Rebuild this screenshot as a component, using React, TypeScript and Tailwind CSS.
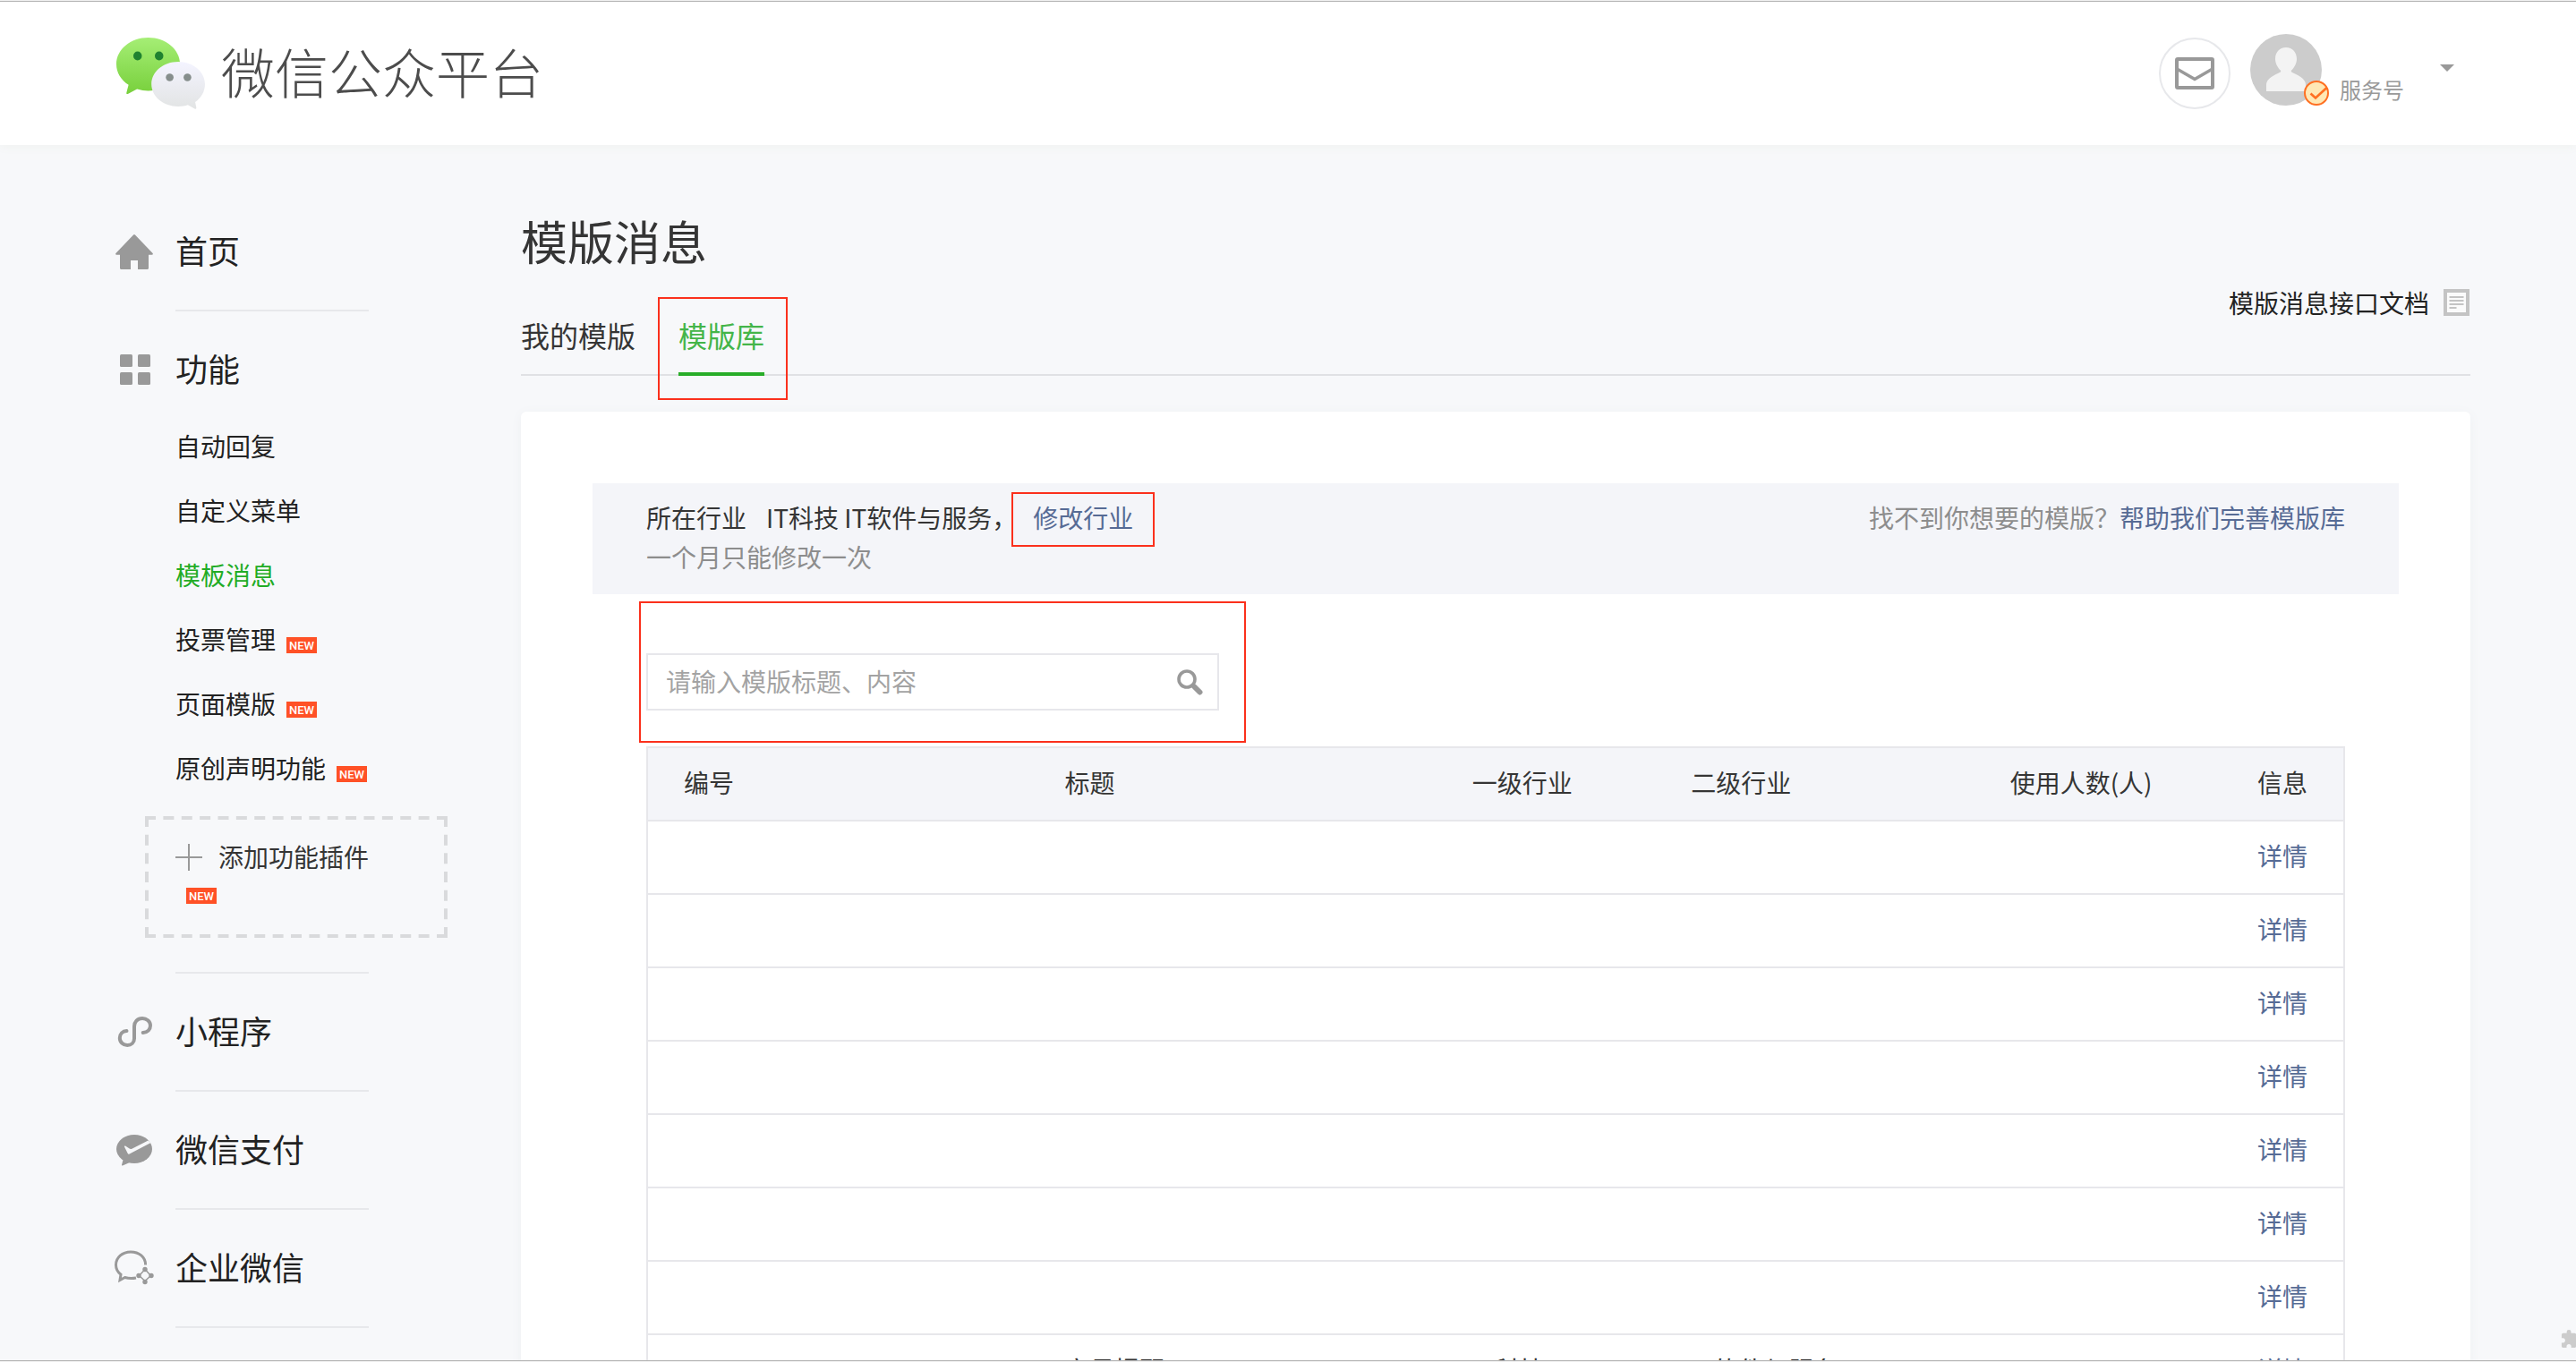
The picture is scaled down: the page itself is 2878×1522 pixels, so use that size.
import React, { useState } from "react";
import { MdExtension } from "react-icons/md";

function NewBadge() {
  return (
    <span className="inline-flex h-[18px] w-[34px] shrink-0 items-center justify-center bg-[#ff5126] font-['Roboto',sans-serif] text-[13px] leading-none font-medium text-white">
      NEW
    </span>
  );
}

function WechatLogo() {
  return (
    <svg aria-hidden="true" viewBox="0 0 96 80" preserveAspectRatio="none" className="h-20 w-[99px]">
      <defs>
        <linearGradient id="green" x1="0" y1="0" x2="0" y2="1">
          <stop offset="0" stopColor="#a5ee75" />
          <stop offset="1" stopColor="#78d03c" />
        </linearGradient>
        <linearGradient id="grey" x1="0" y1="0" x2="0" y2="1">
          <stop offset="0" stopColor="#f4f4ff" />
          <stop offset="1" stopColor="#e2e4e4" />
        </linearGradient>
      </defs>
      <path
        fill="url(#green)"
        d="M34.500 0C15.500 0 0 13.300 0 29.700 0 39 5 47.300 13.200 52.800L11 61.500c-.4 1.500.6 2 1.900 1.200l9.500-5.300c3.900 1.300 8.400 2 12.100 2C53.500 59.400 69 46.100 69 29.700S53.500 0 34.500 0Z"
      />
      <ellipse cx="23" cy="20.500" rx="4.600" ry="5" fill="#208230" />
      <ellipse cx="46.300" cy="20.500" rx="4.600" ry="5" fill="#208230" />
      <path
        fill="url(#grey)"
        d="M67 27C51 27 38 38.200 38 52s13 25 29 25c3.900 0 7.600-.6 10.500-1.700l7.300 4.200c1.200.7 2 .2 1.800-1.200l-1.200-6.300C92 67.400 96 60 96 52 96 38.200 83 27 67 27Z"
      />
      <circle cx="57.800" cy="44.500" r="4.200" fill="#868e8c" />
      <circle cx="77" cy="44.500" r="4.200" fill="#868e8c" />
    </svg>
  );
}

function HomeIcon() {
  return (
    <svg aria-hidden="true" viewBox="0 0 44 44" className="size-11 fill-[#999]">
      <path d="M20.800 3.700a1.700 1.700 0 0 1 2.400 0L42.600 24c.5.600.3 1.700-.6 1.700h-4v14.800c0 .9-.6 1.500-1.500 1.500H26V32h-8v10H7.500c-.9 0-1.500-.6-1.500-1.500V25.700H2c-.9 0-1.100-1.100-.6-1.700Z" />
    </svg>
  );
}

function GridIcon() {
  return (
    <svg aria-hidden="true" viewBox="0 0 44 44" className="size-11 fill-[#999]">
      <rect x="6" y="5" width="14" height="14" rx="1.500" />
      <rect x="26" y="5" width="14" height="14" rx="1.500" />
      <rect x="6" y="25" width="14" height="14" rx="1.500" />
      <rect x="26" y="25" width="14" height="14" rx="1.500" />
    </svg>
  );
}

function MiniProgramIcon() {
  return (
    <svg aria-hidden="true" viewBox="0 0 44 44" className="size-11 fill-none stroke-[#999]">
      <path
        d="M13.500 21C9 21.200 5.800 24.500 5.800 29c0 4.600 4 8 8.400 8 4.600 0 7.800-3 7.800-7.600V16C22 11.200 25.500 7 31 7c4.800 0 9 3.400 9 8 0 4.500-3.200 7.700-8.300 8"
        strokeWidth="4"
        strokeLinecap="round"
      />
    </svg>
  );
}

function PayIcon() {
  return (
    <svg aria-hidden="true" viewBox="0 0 44 44" className="size-11">
      <ellipse cx="22" cy="21" rx="20" ry="16" fill="#999" />
      <path d="M9.500 33 8 38.700c-.2.700.3 1 1 .7L17 36Z" fill="#999" />
      <path
        d="M11 18.500c-.3-1 .7-1.300 1.400-.8l4.200 2.900c.8.500 1.800.5 2.800.1L37.500 11.500l3 2.500L18 25.800c-2 1.300-2.800 1.300-3.500-.3Z"
        fill="#f7f8fa"
      />
    </svg>
  );
}

function WorkIcon() {
  return (
    <svg aria-hidden="true" viewBox="0 0 44 44" className="size-11 fill-none stroke-[#999]">
      <path
        d="M34.600 18.500C34.600 9.600 27.400 4 18 4S1.500 10.300 1.500 18.500c0 4.500 2 8 5.500 10.700L6 35.500l5.500-3c4.500 1.300 8 1.300 12.500.5"
        strokeWidth="3"
      />
      <path d="M34 23.500 40.500 30.500 34 36.500 27.500 30.500Z" strokeWidth="1.500" />
      <g className="fill-[#999] stroke-none">
        <circle cx="34" cy="23.500" r="2.700" />
        <circle cx="41" cy="30.500" r="2.700" />
        <circle cx="34" cy="37.500" r="2.700" />
        <circle cx="27" cy="30.500" r="2.700" />
      </g>
    </svg>
  );
}

function Section({
  icon,
  title,
  children,
}: {
  icon: React.ReactNode;
  title: string;
  children?: React.ReactNode;
}) {
  return (
    <section>
      <a href="#" className="flex h-[130px] items-center gap-6 text-[36px] leading-[54px] text-[#222]">
        {icon}
        <span className="pb-1">{title}</span>
      </a>
      {children}
      <hr className="ml-[68px] w-[216px] border-t-2 border-[#e7e8eb]" />
    </section>
  );
}

const features = [
  { name: "自动回复" },
  { name: "自定义菜单" },
  { name: "模板消息", active: true },
  { name: "投票管理", isNew: true },
  { name: "页面模版", isNew: true },
  { name: "原创声明功能", isNew: true },
];

function Sidebar() {
  return (
    <nav className="w-[454px] shrink-0 pt-[54px]">
      <Section icon={<HomeIcon />} title="首页" />
      <Section icon={<GridIcon />} title="功能">
        <ul className="-mt-[14px]">
          {features.map((f) => (
            <li key={f.name} className="h-[72px]">
              <a
                href="#"
                className={
                  f.active
                    ? "ml-[68px] flex h-full items-center gap-3 text-[28px] text-[#22ac25]"
                    : "ml-[68px] flex h-full items-center gap-3 text-[28px] text-[#222]"
                }
              >
                <span className="pb-1">{f.name}</span>
                {f.isNew && (
                  <span className="flex pt-[10px]">
                    <NewBadge />
                  </span>
                )}
              </a>
            </li>
          ))}
        </ul>
        <button
          type="button"
          className="relative mt-4 mb-[38px] ml-[34px] flex h-[136px] w-[338px] flex-col pt-6 pl-[34px] text-left text-[28px] text-[#353535]"
        >
          <svg
            aria-hidden="true"
            viewBox="0 0 338 136"
            preserveAspectRatio="none"
            className="absolute inset-0 size-full fill-none stroke-[#d9dadc]"
          >
            <path d="M0 2H338M0 134H338" strokeWidth="4" strokeDasharray="12 8.375" />
            <path d="M2 0V136M336 0V136" strokeWidth="4" strokeDasharray="12 8.666" />
          </svg>
          <span className="flex h-11 items-center gap-[18px]">
            <svg aria-hidden="true" viewBox="0 0 30 30" className="size-[30px] stroke-[#999] stroke-2">
              <path d="M15 0v30M0 15h30" />
            </svg>
            <span className="pb-0.5">添加功能插件</span>
          </span>
          <span className="mt-3 ml-3 flex">
            <NewBadge />
          </span>
        </button>
      </Section>
      <Section icon={<MiniProgramIcon />} title="小程序" />
      <Section icon={<PayIcon />} title="微信支付" />
      <Section icon={<WorkIcon />} title="企业微信" />
    </nav>
  );
}

function Header() {
  return (
    <header className="flex h-40 shrink-0 items-center justify-between bg-white pr-[118px] pl-[130px] shadow-[0_2px_10px_#f0f2f0]">
      <a href="#" className="flex items-center gap-[18px] text-[60px] leading-[80px] font-light text-[#4c4c4c]">
        <WechatLogo />
        <span className="pb-1.5">微信公众平台</span>
      </a>
      <div className="flex items-start pb-1">
        <a
          href="#"
          aria-label="消息"
          className="mt-1 flex size-20 items-center justify-center rounded-full border-2 border-[#e7e8eb]"
        >
          <svg aria-hidden="true" viewBox="0 0 44 36" className="h-9 w-11 fill-none stroke-[#999]">
            <rect x="2" y="2" width="40" height="32" rx="1" strokeWidth="4" />
            <path d="M3 13.500 22 24.500 41 13.500" strokeWidth="3.600" />
          </svg>
        </a>
        <div className="relative ml-[22px]">
          <svg role="img" aria-label="头像" viewBox="0 0 80 80" className="size-20">
            <circle cx="40" cy="40" r="40" fill="#ccc" />
            <path
              fill="#f3f3f3"
              d="M40 15c7.500 0 12 5.600 12 13 0 4.600-2.600 9.600-6.300 13 .2 1.500 1 2 2.300 2.500 9 4 14 7.500 14 13.500v7H18v-7c0-6 5-9.500 14-13.500 1.300-.5 2.100-1 2.300-2.500C30.600 37.600 28 32.600 28 28c0-7.400 4.500-13 12-13Z"
            />
          </svg>
          <svg aria-hidden="true" viewBox="0 0 28 28" className="absolute top-[52px] left-[60px] size-7 fill-none stroke-[#ff7022]">
            <circle cx="14" cy="14" r="13" fill="#ffe8b5" strokeWidth="2" />
            <path d="m7.500 14.500 5.500 5L25.500 8" strokeWidth="2.600" />
          </svg>
        </div>
        <button type="button" className="flex items-start text-[24px] leading-9 text-[#999]">
          <span className="mt-11 ml-5">服务号</span>
          <svg aria-hidden="true" viewBox="0 0 16 8" className="mt-[34px] mr-[18px] ml-10 h-2 w-4 fill-[#999]">
            <path d="M0 0h16L8 8Z" />
          </svg>
        </button>
      </div>
    </header>
  );
}

function DocIcon() {
  return (
    <svg aria-hidden="true" viewBox="0 0 30 30" className="size-[30px] fill-none stroke-[#c4c4c4]">
      <rect x="2" y="2" width="25" height="26" strokeWidth="4" fill="#fbfbfb" />
      <path d="M6.500 9h16M6.500 13h16M6.500 17h16M6.500 21h8" strokeWidth="2" />
    </svg>
  );
}

const rows = [
  ["", "", "", ""],
  ["", "", "", ""],
  ["", "", "", ""],
  ["", "", "", ""],
  ["", "", "", ""],
  ["", "", "", ""],
  ["", "", "", ""],
  ["", "交易提醒", "IT科技", "IT软件与服务"],
];

function TemplateTable() {
  return (
    <table className="w-full table-fixed border-collapse border-2 border-[#e7e7eb] text-left text-[28px] leading-10 text-[#353535]">
      <colgroup>
        <col className="w-[22.500%]" />
        <col className="w-[24%]" />
        <col className="w-[12.900%]" />
        <col />
        <col className="w-[13.500%]" />
        <col className="w-[9.200%]" />
      </colgroup>
      <thead className="bg-[#f4f5f9]">
        <tr className="h-[82px]">
          <th className="pb-1 pl-10 font-normal">编号</th>
          <th className="pb-1 pl-10 font-normal">标题</th>
          <th className="pb-1 pl-10 font-normal">一级行业</th>
          <th className="pb-1 pl-10 font-normal">二级行业</th>
          <th className="pr-10 pb-1 text-right font-normal whitespace-nowrap">使用人数(人)</th>
          <th className="pr-10 pb-1 text-right font-normal">信息</th>
        </tr>
      </thead>
      <tbody>
        {rows.map((row, i) => (
          <tr key={i} className="h-[82px] border-t-2 border-[#e7e7eb]">
            {row.map((cell, j) => (
              <td key={j} className="pb-1 pl-10 whitespace-nowrap">
                {cell}
              </td>
            ))}
            <td />
            <td className="pr-10 pb-1 text-right">
              <a href="#" className="text-[#576b95]">
                详情
              </a>
            </td>
          </tr>
        ))}
      </tbody>
    </table>
  );
}

function Main() {
  const [query, setQuery] = useState("");
  return (
    <main className="min-w-0 flex-1 pt-[68px]">
      <h1 className="text-[52px] leading-[78px] text-[#353535]">模版消息</h1>
      <div className="flex h-28 items-end justify-between border-b-2 border-[#e0e1e4]">
        <div className="-mb-0.5 flex gap-12 text-[32px] leading-[44px]">
          <a href="#" className="pb-6 text-[#353535]">
            我的模版
          </a>
          <a href="#" className="relative border-b-4 border-[#28ad28] pb-5 text-[#44b549]">
            模版库
            <span className="absolute -top-5 -right-[26px] -bottom-[31px] -left-[23px] border-2 border-[#fb301c]" />
          </a>
        </div>
        <a href="#" className="flex items-center gap-4 pb-[60px] text-[28px] leading-10 text-[#222]">
          模版消息接口文档
          <DocIcon />
        </a>
      </div>
      <div className="mt-10 rounded-md bg-white px-20 pt-20 shadow-[0_2px_12px_#eef0f3]">
        <div className="flex h-[124px] justify-between bg-[#f4f5f9] px-[60px] pt-4 text-[28px] leading-[44px]">
          <div>
            <p className="flex text-[#353535]">
              <span>所在行业</span>
              <span className="ml-[22px]">IT科技 IT软件与服务，</span>
              <a href="#" className="relative ml-[18px] text-[#576b95]">
                修改行业
                <span className="absolute -inset-x-6 -top-1.5 -bottom-[11px] border-2 border-[#fb301c]" />
              </a>
            </p>
            <p className="text-[#8d8d8d]">一个月只能修改一次</p>
          </div>
          <p className="text-[#8d8d8d]">
            找不到你想要的模版？
            <a href="#" className="text-[#576b95]">
              帮助我们完善模版库
            </a>
          </p>
        </div>
        <div className="px-[60px]">
          <div className="relative my-2 -ml-2 h-[158px] w-[678px] border-2 border-[#fb301c]">
            <form className="mt-14 ml-1.5 flex h-16 w-[640px] items-center border-2 border-[#e7e7eb] bg-white pr-4 pl-5">
              <input
                type="text"
                aria-label="搜索模版"
                placeholder="请输入模版标题、内容"
                value={query}
                onChange={(e) => setQuery(e.target.value)}
                className="min-w-0 flex-1 pb-0.5 text-[28px] leading-10 text-[#353535] outline-none placeholder:text-[#a3a3a3]"
              />
              <button type="button" aria-label="搜索">
                <svg aria-hidden="true" viewBox="0 0 30 30" className="size-[30px] fill-none stroke-[#999]">
                  <circle cx="12" cy="12" r="9" strokeWidth="3.600" />
                  <path d="m20.500 20.500 6 6" strokeWidth="6" strokeLinecap="round" />
                </svg>
              </button>
            </form>
          </div>
          <div className="-mt-1">
            <TemplateTable />
          </div>
        </div>
      </div>
    </main>
  );
}

export default function App() {
  return (
    <div className="h-screen bg-[#f0f0f0] py-px font-['Noto_Sans_CJK_SC',sans-serif] font-normal">
      <div className="relative flex h-full flex-col overflow-hidden border-y border-[#b5b5b5] bg-[#f7f8fa]">
        <Header />
        <div className="flex min-h-0 flex-1 pr-[118px] pl-32">
          <Sidebar />
          <Main />
        </div>
        <MdExtension aria-hidden="true" className="absolute -right-[5px] bottom-3 size-[23px] text-[#ccc]" />
      </div>
    </div>
  );
}
